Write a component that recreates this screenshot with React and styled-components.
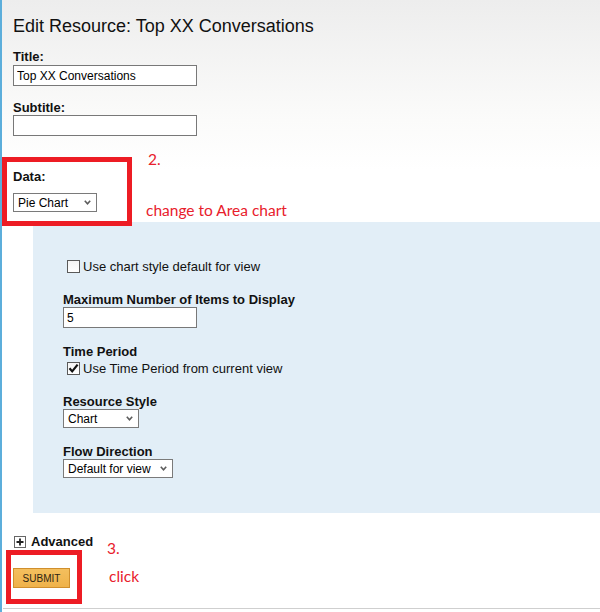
import styled, { createGlobalStyle } from "styled-components";

const GlobalStyle = createGlobalStyle`
  html, body {
    margin: 0;
    padding: 0;
    background: #fff;
  }
  body {
    font-family: "Liberation Sans", Arial, sans-serif;
  }
`;

const Page = styled.div`
  position: relative;
  width: 598px;
  height: 612px;
  display: flex;
  flex-direction: column;
  border-left: 2px solid #5caedb;
  background: linear-gradient(#ededed 0px, #fbfbfa 120px, #ffffff 170px);
  overflow: hidden;
`;

const Form = styled.div`
  flex: 1;
  display: flex;
  flex-direction: column;
  align-items: flex-start;
  padding: 15px 0 0 11px;
`;

const Heading = styled.h1`
  margin: 0;
  font-size: 18px;
  line-height: 22px;
  font-weight: normal;
  color: #111;
`;

const Label = styled.div`
  margin-top: ${(p) => p.$gap || 0}px;
  font-size: 13px;
  line-height: 14px;
  font-weight: bold;
  color: #111;
`;

const TextInput = styled.input`
  box-sizing: border-box;
  width: ${(p) => p.$width}px;
  height: 21px;
  margin: ${(p) => p.$gap || 0}px 0 0 0;
  padding: 0 3px;
  border: 1px solid #787878;
  background: #fff;
  font-family: "Liberation Sans", Arial, sans-serif;
  font-size: 12px;
  color: #000;
  outline: none;
`;

const SelectBox = styled.div`
  box-sizing: border-box;
  width: ${(p) => p.$width}px;
  height: 19px;
  margin-top: ${(p) => p.$gap || 0}px;
  padding: 0 5px 0 4px;
  display: flex;
  align-items: center;
  justify-content: space-between;
  border: 1px solid #7a7a7a;
  background: #fff;
  font-size: 12px;
  color: #000;
`;

const Panel = styled.div`
  align-self: stretch;
  margin: 10px 0 0 20px;
  padding: 37px 0 35px 30px;
  display: flex;
  flex-direction: column;
  align-items: flex-start;
  background: #e2eef7;
`;

const CheckRow = styled.div`
  margin-top: ${(p) => p.$gap || 0}px;
  height: 15px;
  padding-left: 4px;
  display: flex;
  align-items: center;
  gap: 3px;
  font-size: 13px;
  color: #111;
`;

const Box = styled.span`
  box-sizing: border-box;
  width: 13px;
  height: 13px;
  display: flex;
  align-items: center;
  justify-content: center;
  border: 1px solid #5a5a5a;
  background: linear-gradient(#f4f4f4, #ffffff);
`;

const AdvancedRow = styled.div`
  margin-top: 22px;
  padding-left: 1px;
  display: flex;
  align-items: center;
  gap: 5px;
  font-size: 13px;
  line-height: 14px;
  font-weight: bold;
  color: #111;
`;

const SubmitButton = styled.button`
  box-sizing: border-box;
  width: 57px;
  height: 20px;
  margin-top: 19px;
  padding: 0;
  border: 1px solid #d08f2d;
  background: linear-gradient(#f4bf5e, #efb24a);
  font-family: "Liberation Sans", Arial, sans-serif;
  font-size: 10px;
  color: #2e2412;
  cursor: pointer;
`;

const Rule = styled.div`
  height: 1px;
  margin: 0 0 3px 1px;
  background: #cfcfcf;
`;

const Annotation = styled.div`
  position: absolute;
  left: ${(p) => p.$x}px;
  top: ${(p) => p.$y}px;
  font-family: Lato, "Open Sans", sans-serif;
  font-size: 15.5px;
  line-height: 15px;
  color: #e8202c;
  white-space: nowrap;
`;

const Highlight = styled.div`
  position: absolute;
  left: ${(p) => p.$x}px;
  top: ${(p) => p.$y}px;
  width: ${(p) => p.$w}px;
  height: ${(p) => p.$h}px;
  box-sizing: border-box;
  border: 5px solid #ed1c24;
`;

const Chevron = () => (
  <svg width="7" height="5" viewBox="0 0 7 5">
    <path d="M0.8 0.8 L3.5 3.8 L6.2 0.8" fill="none" stroke="#5c5c5c" strokeWidth="1.6" />
  </svg>
);

const Select = ({ width, gap, children }) => (
  <SelectBox $width={width} $gap={gap}>
    <span>{children}</span>
    <Chevron />
  </SelectBox>
);

const Checkbox = ({ checked }) => (
  <Box>
    {checked && (
      <svg width="11" height="11" viewBox="0 0 11 11">
        <path d="M1.5 5.3 L4.2 8.4 L9.6 1.6" fill="none" stroke="#111" strokeWidth="2.2" />
      </svg>
    )}
  </Box>
);

const PlusIcon = () => (
  <svg width="12" height="12" viewBox="0 0 12 12">
    <rect x="0.5" y="0.5" width="11" height="11" fill="#fff" stroke="#666" />
    <path d="M2.5 6 H9.5 M6 2.5 V9.5" stroke="#222" strokeWidth="1.8" />
  </svg>
);

export default function App() {
  return (
    <>
      <GlobalStyle />
      <Page>
        <Form>
          <Heading>Edit Resource: Top XX Conversations</Heading>

          <Label $gap={13}>Title:</Label>
          <TextInput $width={184} $gap={1} defaultValue="Top XX Conversations" />

          <Label $gap={15}>Subtitle:</Label>
          <TextInput $width={184} defaultValue="" />

          <Label $gap={34}>Data:</Label>
          <Select width={84} gap={9}>Pie Chart</Select>

          <Panel>
            <CheckRow>
              <Checkbox />
              Use chart style default for view
            </CheckRow>

            <Label $gap={19}>Maximum Number of Items to Display</Label>
            <TextInput $width={134} defaultValue="5" />

            <Label $gap={17}>Time Period</Label>
            <CheckRow $gap={2}>
              <Checkbox checked />
              Use Time Period from current view
            </CheckRow>

            <Label $gap={19}>Resource Style</Label>
            <Select width={76}>Chart</Select>

            <Label $gap={17}>Flow Direction</Label>
            <Select width={110}>Default for view</Select>
          </Panel>

          <AdvancedRow>
            <PlusIcon />
            Advanced
          </AdvancedRow>

          <SubmitButton>SUBMIT</SubmitButton>
        </Form>
        <Rule />

        <Highlight $x={0} $y={157} $w={130} $h={69} />
        <Annotation $x={146} $y={152}>2.</Annotation>
        <Annotation $x={144} $y={203}>change to Area chart</Annotation>

        <Highlight $x={4} $y={550} $w={76} $h={54} />
        <Annotation $x={105} $y={541}>3.</Annotation>
        <Annotation $x={107} $y={569}>click</Annotation>
      </Page>
    </>
  );
}
